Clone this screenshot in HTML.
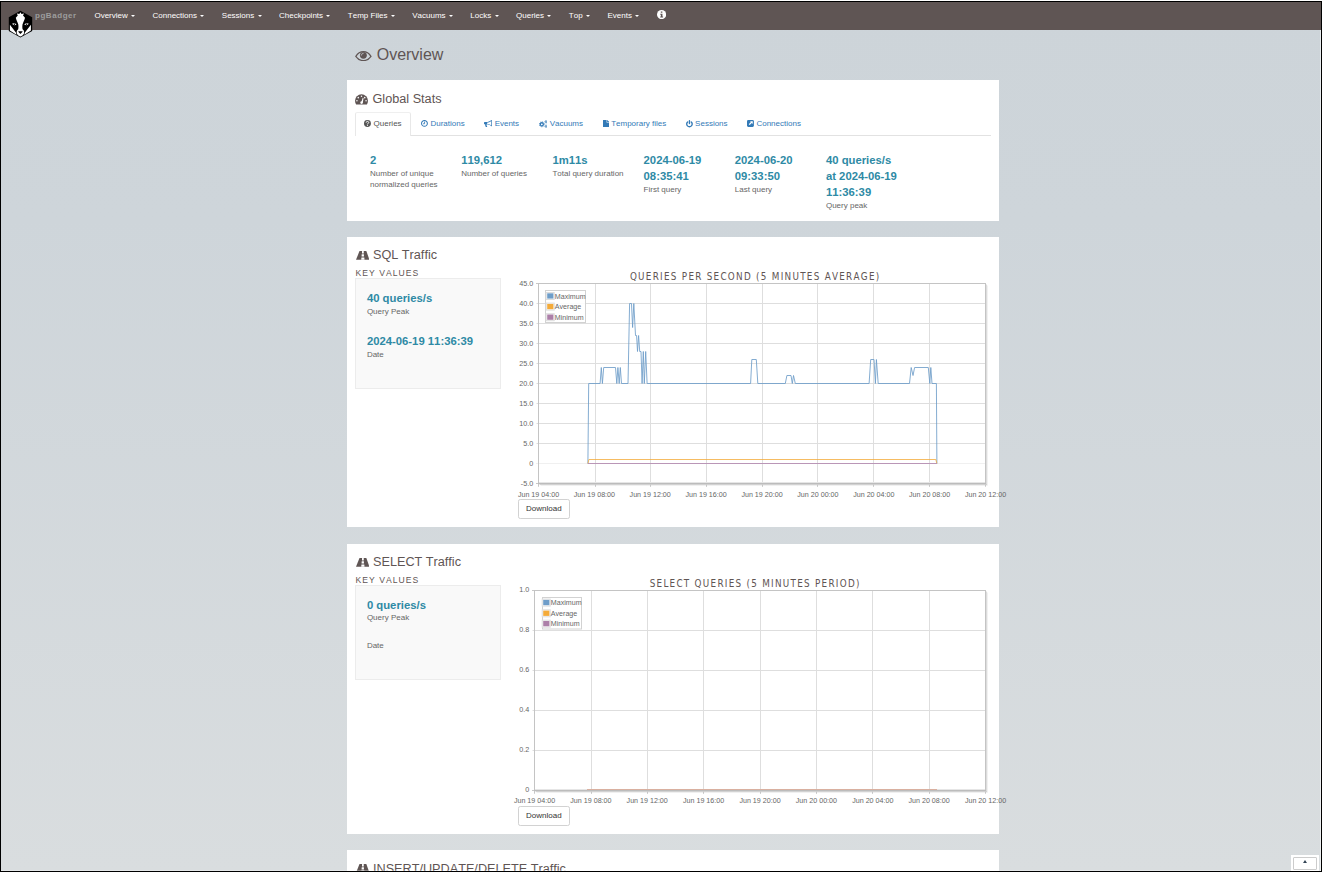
<!DOCTYPE html>
<html lang="en">
<head>
<meta charset="utf-8">
<title>pgBadger :: PostgreSQL log analyzer</title>
<style>
*{box-sizing:border-box;margin:0;padding:0}
html,body{width:1322px;height:872px;overflow:hidden;background:#fff}
body{font-kerning:none;font-family:"Liberation Sans",Arial,sans-serif;font-size:8px;line-height:11.43px;color:#333;position:relative}
#frame{position:absolute;left:0;top:0;width:1322px;height:872px;overflow:hidden;background:#fff}
#bg{position:absolute;left:1px;top:2px;width:1320px;height:869px;background:linear-gradient(to bottom,#cdd4d9 0%,#ced5da 25%,#d9dddf 100%)}
.bk{position:absolute;background:#000}
/* navbar */
#nav{position:absolute;left:1px;top:2px;width:1320px;height:28px;background:#5f5554}
#brand{position:absolute;left:34px;top:8.3px;font-weight:bold;color:#9d9d9d;font-size:8px;line-height:11.43px;letter-spacing:.55px;white-space:nowrap}
#menu{position:absolute;left:84.7px;top:0;height:28px;display:flex;white-space:nowrap;list-style:none}
#menu li{padding:7.5px 8.73px 0 8.73px;color:#fff;font-size:8px;line-height:11.43px;height:28px}
.caret{position:relative;top:.9px;display:inline-block;width:0;height:0;margin-left:1.14px;vertical-align:middle;border-top:2.3px solid #fff;border-left:2.3px solid transparent;border-right:2.3px solid transparent}
/* headings */
h1{position:absolute;left:355px;top:44.8px;font-size:16px;line-height:20px;font-weight:normal;color:#5f5554;white-space:nowrap}
.panel{position:absolute;left:347px;width:652px;background:#fff}
h2{position:absolute;left:8.3px;top:9.6px;font-size:12.68px;line-height:18px;font-weight:normal;color:#5f5554;white-space:nowrap}
svg{display:block}
.ic{position:absolute}

.tabs{position:absolute;left:8.3px;top:32px;width:635.5px;height:24px;list-style:none;display:flex;border-bottom:1px solid #e2e2e2;white-space:nowrap}
.tabs li{height:23px;padding:5.2px 8.2px 0 8.2px;margin-right:1.4px;border:1px solid transparent;border-bottom:0;color:#337ab7;font-size:8px;line-height:11.43px;border-radius:2.3px 2.3px 0 0;display:flex;align-items:flex-start}
.tabs li.on{background:#fff;border-color:#efefef #e8e8e8 #fff #e8e8e8;color:#555;height:24px}
.tabs li svg{margin:1.9px 2.2px 0 0;flex:none}
.figs{position:absolute;left:23px;top:71.5px;list-style:none;display:flex;white-space:nowrap}
.figs li{width:91.2px}
.fig{display:block;font-size:11.3px;line-height:16.33px;font-weight:bold;color:#2e8aa5}
.lab{display:block;font-size:8px;line-height:11.43px;color:#666}
/*GEN*/
.kv{position:absolute;left:8.5px;top:31px;font-size:8.6px;line-height:11.43px;text-transform:uppercase;letter-spacing:1.02px;color:#5f5554;white-space:nowrap}
.well{position:absolute;left:8.3px;top:41.8px;width:145.7px;background:#f9f9f9;border:1px solid #ececec;padding:9.9px 0 0 10.6px;white-space:nowrap}
.dl{position:absolute;left:171.2px;top:262.5px;width:51.4px;height:19.6px;border:1px solid #d2d2d2;border-radius:2.3px;background:#fff;color:#333;font-size:8px;line-height:17.4px;text-align:center}
.well .fig{position:relative;top:.6px}
/*/GEN*/
</style>
</head>
<body>
<div id="frame">
<div id="bg"></div>
<div id="nav">
  <div id="brand">pgBadger</div>
  <ul id="menu">
    <li>Overview <b class="caret"></b></li>
    <li>Connections <b class="caret"></b></li>
    <li>Sessions <b class="caret"></b></li>
    <li>Checkpoints <b class="caret"></b></li>
    <li>Temp Files <b class="caret"></b></li>
    <li>Vacuums <b class="caret"></b></li>
    <li>Locks <b class="caret"></b></li>
    <li>Queries <b class="caret"></b></li>
    <li>Top <b class="caret"></b></li>
    <li>Events <b class="caret"></b></li>
  </ul>
</div>
<svg class="ic" style="left:8px;top:10px" width="25" height="28" viewBox="8 10 25 28"><path d="M20.4 10.7L32.2 17.3V30.9L20.4 37.4 8.8 30.9V17.3Z" fill="#000"/><path fill="#fff" d="M20.4 12.2L21.5 14 24 13.6 23 15.4 25 17.8C24.6 20.2 23 22.4 22.5 24.6 22.2 26.6 22.3 28 22.6 29.2L23.8 30.4C24.3 31.8 24.2 33.3 23.4 34.6 22.5 35.8 21.6 36.4 20.4 36.5 19.2 36.4 18.3 35.8 17.4 34.6 16.6 33.3 16.5 31.8 17 30.4L18.2 29.2C18.5 28 18.6 26.6 18.3 24.6 17.8 22.4 16.2 20.2 15.8 17.8L17.8 15.4 16.8 13.6 19.3 14Z"/><path fill="#fff" d="M9.9 24.8L15.9 32.4 16.5 34.7 9.9 30.6ZM30.9 24.8L24.9 32.4 24.3 34.7 30.9 30.6Z"/><path fill="#000" d="M18 31.6C19.6 31.1 21.2 31.1 22.8 31.6L20.4 34Z"/><path fill="#fff" d="M12 23.8C13.600000000000001 22.8 15.2 23.1 16.5 24.4 15 25.5 13.3 25.4 12 23.8ZM28.8 23.8C27.2 22.8 25.6 23.1 24.3 24.4 25.8 25.5 27.5 25.4 28.8 23.8Z"/><circle cx="14.4" cy="24.2" r=".7" fill="#000"/><circle cx="26.4" cy="24.2" r=".7" fill="#000"/></svg>
<svg class="ic" style="left:656.8px;top:10.3px" width="9.2" height="9.2" viewBox="0 0 14 14"><circle cx="7" cy="7" r="7" fill="#fff"/><path fill="#5f5554" d="M5.8 2.2H8.2V4.2H5.8ZM5 5.6H8.3V10H9.3V11.6H4.9V10H5.9V7.2H5Z"/></svg>
<svg class="ic" style="left:355px;top:50.7px" width="16.8" height="10.3" viewBox="0 0 16.4 10.2"><path fill="none" stroke="#5f5554" stroke-width="1.25" d="M.7 5.3C2.6 2.3 5.2.7 8.2.7S13.8 2.3 15.7 5.3C13.8 8 11.2 9.5 8.2 9.5S2.6 8 .7 5.3Z"/><circle cx="8.2" cy="4.3" r="3.4" fill="#5f5554"/><path fill="none" stroke="#cdd3d9" stroke-width=".7" stroke-linecap="round" d="M6.1 4.2A2.1 2.1 0 0 1 8.1 2.2"/></svg>
<h1><span style="margin-left:21.7px">Overview</span></h1>
<div class="panel" style="top:80px;height:140.7px">
  <h2><svg class="ic" style="left:0;top:4.7px" width="13" height="10.5" viewBox="0 0 12.8 10.2"><path fill="#5f5554" d="M0 6.6A6.4 6.4 0 0 1 12.8 6.6C12.8 7.9 12.4 9.2 11.7 10.2L1.1 10.2C.4 9.2 0 7.9 0 6.6Z"/><g fill="#fff"><circle cx="1.9" cy="6.6" r=".75"/><circle cx="3.2" cy="3.5" r=".75"/><circle cx="6.4" cy="2.1" r=".75"/><circle cx="9.6" cy="3.5" r=".75"/><circle cx="10.9" cy="6.6" r=".75"/><path d="M5.2 8.3a1.35 1.35 0 1 0 2.6-.5L8.4 3.9 7.6 3.7 6.5 7.1A1.35 1.35 0 0 0 5.2 8.3Z"/></g></svg><span style="margin-left:17.2px">Global Stats</span></h2>
  <ul class="tabs">
    <li class="on"><svg width="6.9" height="6.9" viewBox="0 0 14 14"><circle cx="7" cy="7" r="7" fill="#555"/><path fill="none" stroke="#fff" stroke-width="2" d="M4.4 5.3C4.4 3.6 5.6 2.9 7 2.9S9.6 3.7 9.6 5.1C9.6 6.8 7 6.9 7 8.8"/><rect x="6" y="9.8" width="2" height="2" fill="#fff"/></svg>Queries</li>
    <li><svg width="6.9" height="6.9" viewBox="0 0 14 14"><circle cx="7" cy="7" r="5.9" fill="none" stroke="#337ab7" stroke-width="2.1"/><path fill="none" stroke="#337ab7" stroke-width="1.7" d="M7.2 3.2V7.6H4.2"/></svg>Durations</li>
    <li><svg width="8" height="7.2" viewBox="0 0 16 14.4"><path fill="#337ab7" d="M14.6 0C15.4 0 16 .6 16 1.3V5C16.6 5.2 17 5.7 17 6.3S16.6 7.4 16 7.6V11.300000000000001C16 12 15.4 12.600000000000001 14.6 12.600000000000001 11.5 10 8.6 9 5.9 8.7 5 9 4.800000000000001 10 5.4 10.600000000000001 4.9 11.4 5.7 12.3 6.6 13.200000000000001 6 14.3 4.2 14.600000000000001 3.3 13.700000000000001 2.8 12 1.9 10.4 2.4 8.6H1.3C.6 8.6 0 8 0 7.300000000000001V5.300000000000001C0 4.6 .6 4 1.3 4H4.7C7.9 4 11.3 2.8 14.6 0ZM14.6 10.8V1.8C11.600000000000001 4.1 9 5 6.1 5.3V7.300000000000001C9 7.6 11.600000000000001 8.5 14.6 10.8Z"/></svg>Events</li>
    <li><svg width="8.6" height="8" viewBox="0 0 17.2 16"><g fill="none" stroke="#337ab7"><circle cx="5.6" cy="8.6" r="3.1" stroke-width="2.6"/><circle cx="5.6" cy="8.6" r="4.9" stroke-width="1.7" stroke-dasharray="2.1 1.75"/><circle cx="14" cy="3.6" r="1.5" stroke-width="1.5"/><circle cx="14" cy="3.6" r="2.7" stroke-width="1.1" stroke-dasharray="1.3 1.1"/><circle cx="14" cy="12.6" r="1.5" stroke-width="1.5"/><circle cx="14" cy="12.6" r="2.7" stroke-width="1.1" stroke-dasharray="1.3 1.1"/></g></svg>Vacuums</li>
    <li><svg width="6.2" height="7.4" viewBox="0 0 12 14"><path fill="#337ab7" d="M.8 0H7V4.300000000000001C7 4.7 7.3 5 7.7 5H12V13.200000000000001C12 13.600000000000001 11.7 14 11.2 14H.8C.3 14 0 13.600000000000001 0 13.200000000000001V.8C0 .3 .3 0 .8 0ZM8 0C8.4 .1 8.8 .3 9.1 .6L11.4 2.9C11.7 3.2 11.9 3.6 12 4H8Z"/></svg>Temporary files</li>
    <li><svg width="6.9" height="7.6" viewBox="0 0 13.8 15.2"><path fill="none" stroke="#337ab7" stroke-width="2.7" stroke-linecap="round" d="M10.6 3.9A5.5 5.5 0 1 1 3.2 3.9M6.9 1.4V7"/></svg>Sessions</li>
    <li><svg width="6.9" height="6.9" viewBox="0 0 14 14"><rect width="14" height="14" rx="2.6" fill="#337ab7"/><path fill="#fff" d="M11.7 2.3V8L9.8 6.1 5.5 10.4 3.6 8.5 7.9 4.2 6 2.3Z"/></svg>Connections</li>
  </ul>
  <ul class="figs">
    <li><span class="fig">2</span><span class="lab">Number of unique<br>normalized queries</span></li>
    <li><span class="fig">119,612</span><span class="lab">Number of queries</span></li>
    <li><span class="fig">1m11s</span><span class="lab">Total query duration</span></li>
    <li><span class="fig">2024-06-19<br>08:35:41</span><span class="lab">First query</span></li>
    <li><span class="fig">2024-06-20<br>09:33:50</span><span class="lab">Last query</span></li>
    <li><span class="fig">40 queries/s<br>at 2024-06-19<br>11:36:39</span><span class="lab">Query peak</span></li>
  </ul>
</div>

<!--PANEL2-->
<div class="panel" style="top:236.7px;height:290.3px">
<h2><svg class="ic" style="left:.3px;top:4.9px" width="13.5" height="8.8" viewBox="0 0 13.46 8.77"><path fill="#5f5554" d="M3.5 0H10.3L13.46 8.77H0Z"/><path fill="#fff" d="M6.05 0H7.7L7.75 2.4H5.95ZM5.7 3.15H7.85L7.95 5.4H5.55ZM5.4 6.5H8.3L8.5 8.77H5.2Z"/></svg><span style="margin-left:17.7px">SQL Traffic</span></h2>
<div class="kv">Key values</div>
<div class="well" style="top:41.8px;height:110.6px"><span class="fig">40 queries/s</span><span class="lab">Query Peak</span>
<span class="fig" style="margin-top:15.6px">2024-06-19 11:36:39</span><span class="lab">Date</span>
</div>
<div class="dl">Download</div>
</div>
<svg class="ic chart" style="left:505px;top:259px" width="510" height="246" viewBox="505 259 510 246" font-family="Liberation Sans, Arial, sans-serif">
<path d="M595.5 283.5V486.5M650.5 283.5V486.5M706.5 283.5V486.5M762.5 283.5V486.5M817.5 283.5V486.5M873.5 283.5V486.5M929.5 283.5V486.5M536.5 303.5H985.5M536.5 323.5H985.5M536.5 343.5H985.5M536.5 363.5H985.5M536.5 383.5H985.5M536.5 403.5H985.5M536.5 423.5H985.5M536.5 443.5H985.5M536.5 463.5H985.5" fill="none" stroke="#dedede" stroke-width="1"/>
<path d="M595.5 484.5V486.5M650.5 484.5V486.5M706.5 484.5V486.5M762.5 484.5V486.5M817.5 484.5V486.5M873.5 484.5V486.5M929.5 484.5V486.5" stroke="#c6c6c6" stroke-width="1"/>
<path d="M536.0 283.5H538.5M536.0 483.5H538.5M538.5 483.5V486.5M985.5 483.5V486.5" stroke="#c8c8c8" stroke-width="1"/>
<path d="M536.5 463.5H985.5" stroke="#f0f0f0" stroke-width="1"/>
<path d="M587.9 463.5L588.7 383.5L600.1 383.5L601.3 367.5L602.4 383.5L603.7 367.5L615.5 367.5L616.8 383.5L617.9 367.5L619.2 383.5L620.3 367.5L621.5 383.5L628.0 383.5L629.6 303.5L631.5 303.5L632.6 327.5L633.8 303.5L635.5 335.5L636.6 335.5L637.5 351.5L638.6 335.5L639.7 351.5L641.0 351.5L642.1 383.5L643.3 351.5L644.3 383.5L645.7 351.5L647.1 383.5L750.6 383.5L751.8 359.5L756.3 359.5L757.8 383.5L785.3 383.5L786.9 375.5L791.0 375.5L792.3 383.5L793.5 375.5L795.3 383.5L869.1 383.5L870.7 359.5L874.0 359.5L875.4 383.5L876.4 359.5L878.2 383.5L909.5 383.5L911.2 367.5L913.0 375.5L914.6 367.5L928.3 367.5L929.8 383.5L930.8 367.5L932.0 383.5L936.4 383.5L936.9 463.5" fill="none" stroke="#6e9dc9" stroke-width=".85" stroke-linejoin="round"/>
<path d="M587.9 463.5L588.9 459.5H935.8L936.9 463.5" fill="none" stroke="#f4ab3a" stroke-width=".8"/>
<path d="M587.9 463.5H936.9" fill="none" stroke="#ac7fa8" stroke-width=".8"/>
<path d="M986.5 284.5V485.0" stroke="#dcdcdc" stroke-width="1"/>
<path d="M987.5 285.5V485.5" stroke="#f1f1f1" stroke-width="1"/>
<path d="M539.5 484.5H987.0" stroke="#d2d2d2" stroke-width="1"/>
<path d="M540.5 485.5H987.5" stroke="#f0f0f0" stroke-width="1"/>
<path d="M538.5 482.5H985.5" stroke="#e6e6e6" stroke-width="1"/>
<path d="M538.0 283.5H986.0M538.5 283.5V483.5M985.5 283.5V483.5" fill="none" stroke="#c4c4c4" stroke-width="1"/>
<path d="M538.0 483.5H986.0" fill="none" stroke="#bcbcbc" stroke-width="1"/>
<path d="M538.5 484.5V486.5M595.5 484.5V486.5M650.5 484.5V486.5M706.5 484.5V486.5M762.5 484.5V486.5M817.5 484.5V486.5M873.5 484.5V486.5M929.5 484.5V486.5M985.5 484.5V486.5" stroke="#c6c6c6" stroke-width="1"/>
<g font-size="7.2" fill="#666" text-anchor="end">
<text x="533.2" y="286.1">45.0</text>
<text x="533.2" y="306.1">40.0</text>
<text x="533.2" y="326.1">35.0</text>
<text x="533.2" y="346.1">30.0</text>
<text x="533.2" y="366.1">25.0</text>
<text x="533.2" y="386.1">20.0</text>
<text x="533.2" y="406.1">15.0</text>
<text x="533.2" y="426.1">10.0</text>
<text x="533.2" y="446.1">5.0</text>
<text x="533.2" y="466.1">0</text>
<text x="533.2" y="486.1">-5.0</text>
</g>
<g font-size="7.14" fill="#666" text-anchor="middle">
<text x="538.5" y="496.6">Jun 19 04:00</text>
<text x="594.4" y="496.6">Jun 19 08:00</text>
<text x="650.2" y="496.6">Jun 19 12:00</text>
<text x="706.1" y="496.6">Jun 19 16:00</text>
<text x="762.0" y="496.6">Jun 19 20:00</text>
<text x="817.9" y="496.6">Jun 20 00:00</text>
<text x="873.8" y="496.6">Jun 20 04:00</text>
<text x="929.6" y="496.6">Jun 20 08:00</text>
<text x="985.5" y="496.6">Jun 20 12:00</text>
</g>
<text x="755.2" y="280.0" font-family="DejaVu Sans Condensed, DejaVu Sans, sans-serif" font-size="9.8" letter-spacing="1.28" fill="#5f5554" text-anchor="middle">QUERIES PER SECOND (5 MINUTES AVERAGE)</text>
<rect x="545.5" y="290.5" width="40" height="32" fill="#fff" fill-opacity=".9" stroke="#d2d2d2" stroke-width="1"/>
<rect x="546.2" y="292.5" width="8" height="7" fill="#fff" stroke="#ddd" stroke-width="1"/>
<rect x="547.2" y="293.3" width="6.2" height="5.3" fill="#6e9dc9"/>
<text x="554.8" y="298.5" font-size="7.1" fill="#666">Maximum</text>
<rect x="546.2" y="303.1" width="8" height="7" fill="#fff" stroke="#ddd" stroke-width="1"/>
<rect x="547.2" y="303.9" width="6.2" height="5.3" fill="#f4ab3a"/>
<text x="554.8" y="309.1" font-size="7.1" fill="#666">Average</text>
<rect x="546.2" y="313.7" width="8" height="7" fill="#fff" stroke="#ddd" stroke-width="1"/>
<rect x="547.2" y="314.5" width="6.2" height="5.3" fill="#ac7fa8"/>
<text x="554.8" y="319.7" font-size="7.1" fill="#666">Minimum</text>
</svg>
<!--/PANEL2-->
<!--PANEL3-->
<div class="panel" style="top:543.8px;height:290.3px">
<h2><svg class="ic" style="left:.3px;top:4.9px" width="13.5" height="8.8" viewBox="0 0 13.46 8.77"><path fill="#5f5554" d="M3.5 0H10.3L13.46 8.77H0Z"/><path fill="#fff" d="M6.05 0H7.7L7.75 2.4H5.95ZM5.7 3.15H7.85L7.95 5.4H5.55ZM5.4 6.5H8.3L8.5 8.77H5.2Z"/></svg><span style="margin-left:17.7px">SELECT Traffic</span></h2>
<div class="kv">Key values</div>
<div class="well" style="top:41.4px;height:94.6px"><span class="fig">0 queries/s</span><span class="lab">Query Peak</span>
<span class="lab" style="margin-top:16.4px">Date</span>
</div>
<div class="dl">Download</div>
</div>
<svg class="ic chart" style="left:505px;top:566px" width="510" height="246" viewBox="505 566 510 246" font-family="Liberation Sans, Arial, sans-serif">
<path d="M591.5 590.5V793.5M647.5 590.5V793.5M703.5 590.5V793.5M760.5 590.5V793.5M816.5 590.5V793.5M872.5 590.5V793.5M929.5 590.5V793.5M532.5 630.5H985.5M532.5 670.5H985.5M532.5 710.5H985.5M532.5 750.5H985.5" fill="none" stroke="#dedede" stroke-width="1"/>
<path d="M591.5 791.5V793.5M647.5 791.5V793.5M703.5 791.5V793.5M760.5 791.5V793.5M816.5 791.5V793.5M872.5 791.5V793.5M929.5 791.5V793.5" stroke="#c6c6c6" stroke-width="1"/>
<path d="M532.0 590.5H534.5M532.0 790.5H534.5M534.5 790.5V793.5M985.5 790.5V793.5" stroke="#c8c8c8" stroke-width="1"/>
<path d="M986.5 591.5V792.0" stroke="#dcdcdc" stroke-width="1"/>
<path d="M987.5 592.5V792.5" stroke="#f1f1f1" stroke-width="1"/>
<path d="M535.5 791.5H987.0" stroke="#d2d2d2" stroke-width="1"/>
<path d="M536.5 792.5H987.5" stroke="#f0f0f0" stroke-width="1"/>
<path d="M534.5 789.5H985.5" stroke="#e6e6e6" stroke-width="1"/>
<path d="M534.0 590.5H986.0M534.5 590.5V790.5M985.5 590.5V790.5" fill="none" stroke="#c4c4c4" stroke-width="1"/>
<path d="M534.0 790.5H986.0" fill="none" stroke="#bcbcbc" stroke-width="1"/>
<path d="M587 789.5H937" fill="none" stroke="#d9b0a0" stroke-width="1"/>
<path d="M534.5 791.5V793.5M591.5 791.5V793.5M647.5 791.5V793.5M703.5 791.5V793.5M760.5 791.5V793.5M816.5 791.5V793.5M872.5 791.5V793.5M929.5 791.5V793.5M985.5 791.5V793.5" stroke="#c6c6c6" stroke-width="1"/>
<g font-size="7.2" fill="#666" text-anchor="end">
<text x="529.2" y="592.2">1.0</text>
<text x="529.2" y="632.2">0.8</text>
<text x="529.2" y="672.2">0.6</text>
<text x="529.2" y="712.2">0.4</text>
<text x="529.2" y="752.2">0.2</text>
<text x="529.2" y="792.2">0</text>
</g>
<g font-size="7.14" fill="#666" text-anchor="middle">
<text x="534.5" y="803">Jun 19 04:00</text>
<text x="590.9" y="803">Jun 19 08:00</text>
<text x="647.2" y="803">Jun 19 12:00</text>
<text x="703.6" y="803">Jun 19 16:00</text>
<text x="760.0" y="803">Jun 19 20:00</text>
<text x="816.4" y="803">Jun 20 00:00</text>
<text x="872.8" y="803">Jun 20 04:00</text>
<text x="929.1" y="803">Jun 20 08:00</text>
<text x="985.5" y="803">Jun 20 12:00</text>
</g>
<text x="755.2" y="587.0" font-family="DejaVu Sans Condensed, DejaVu Sans, sans-serif" font-size="9.8" letter-spacing="1.28" fill="#5f5554" text-anchor="middle">SELECT QUERIES (5 MINUTES PERIOD)</text>
<rect x="542.5" y="597.5" width="39" height="31.5" fill="#fff" fill-opacity=".9" stroke="#d2d2d2" stroke-width="1"/>
<rect x="542.2" y="599.1" width="8" height="7" fill="#fff" stroke="#ddd" stroke-width="1"/>
<rect x="543.2" y="599.9" width="6.2" height="5.3" fill="#6e9dc9"/>
<text x="550.8" y="605.1" font-size="7.1" fill="#666">Maximum</text>
<rect x="542.2" y="609.8" width="8" height="7" fill="#fff" stroke="#ddd" stroke-width="1"/>
<rect x="543.2" y="610.6" width="6.2" height="5.3" fill="#f4ab3a"/>
<text x="550.8" y="615.8" font-size="7.1" fill="#666">Average</text>
<rect x="542.2" y="620.2" width="8" height="7" fill="#fff" stroke="#ddd" stroke-width="1"/>
<rect x="543.2" y="621.0" width="6.2" height="5.3" fill="#ac7fa8"/>
<text x="550.8" y="626.2" font-size="7.1" fill="#666">Minimum</text>
</svg>
<!--/PANEL3-->
<!--PANEL4-->
<div class="panel" style="top:850px;height:30px"><h2><svg class="ic" style="left:.3px;top:4.9px" width="13.5" height="8.8" viewBox="0 0 13.46 8.77"><path fill="#5f5554" d="M3.5 0H10.3L13.46 8.77H0Z"/><path fill="#fff" d="M6.05 0H7.7L7.75 2.4H5.95ZM5.7 3.15H7.85L7.95 5.4H5.55ZM5.4 6.5H8.3L8.5 8.77H5.2Z"/></svg><span style="margin-left:17.7px">INSERT/UPDATE/DELETE Traffic</span></h2></div>
<!--/PANEL4-->
<!--TOTOP-->
<div style="position:absolute;left:1291px;top:855px;width:28px;height:16px;background:#fff"><div style="position:absolute;left:2px;top:2px;width:24px;height:13px;border:1px solid #ccc;border-radius:1px"></div><svg class="ic" style="left:11.5px;top:5px" width="4" height="3" viewBox="0 0 4 3"><path d="M0 3L2 0 4 3Z" fill="#345"/></svg></div>
<!--/TOTOP-->
<div style="position:absolute;left:1320px;top:30px;width:1px;height:841px;background:rgba(255,255,255,.55)"></div>
<div style="position:absolute;left:1px;top:870px;width:1320px;height:1px;background:rgba(255,255,255,.3)"></div>
<div class="bk" style="left:0;top:1px;width:1322px;height:1px"></div>
<div class="bk" style="left:0;top:1px;width:1px;height:871px"></div>
<div class="bk" style="left:1321px;top:1px;width:1px;height:871px"></div>
<div class="bk" style="left:0;top:871px;width:1322px;height:1px"></div>
</div>
</body>
</html>
